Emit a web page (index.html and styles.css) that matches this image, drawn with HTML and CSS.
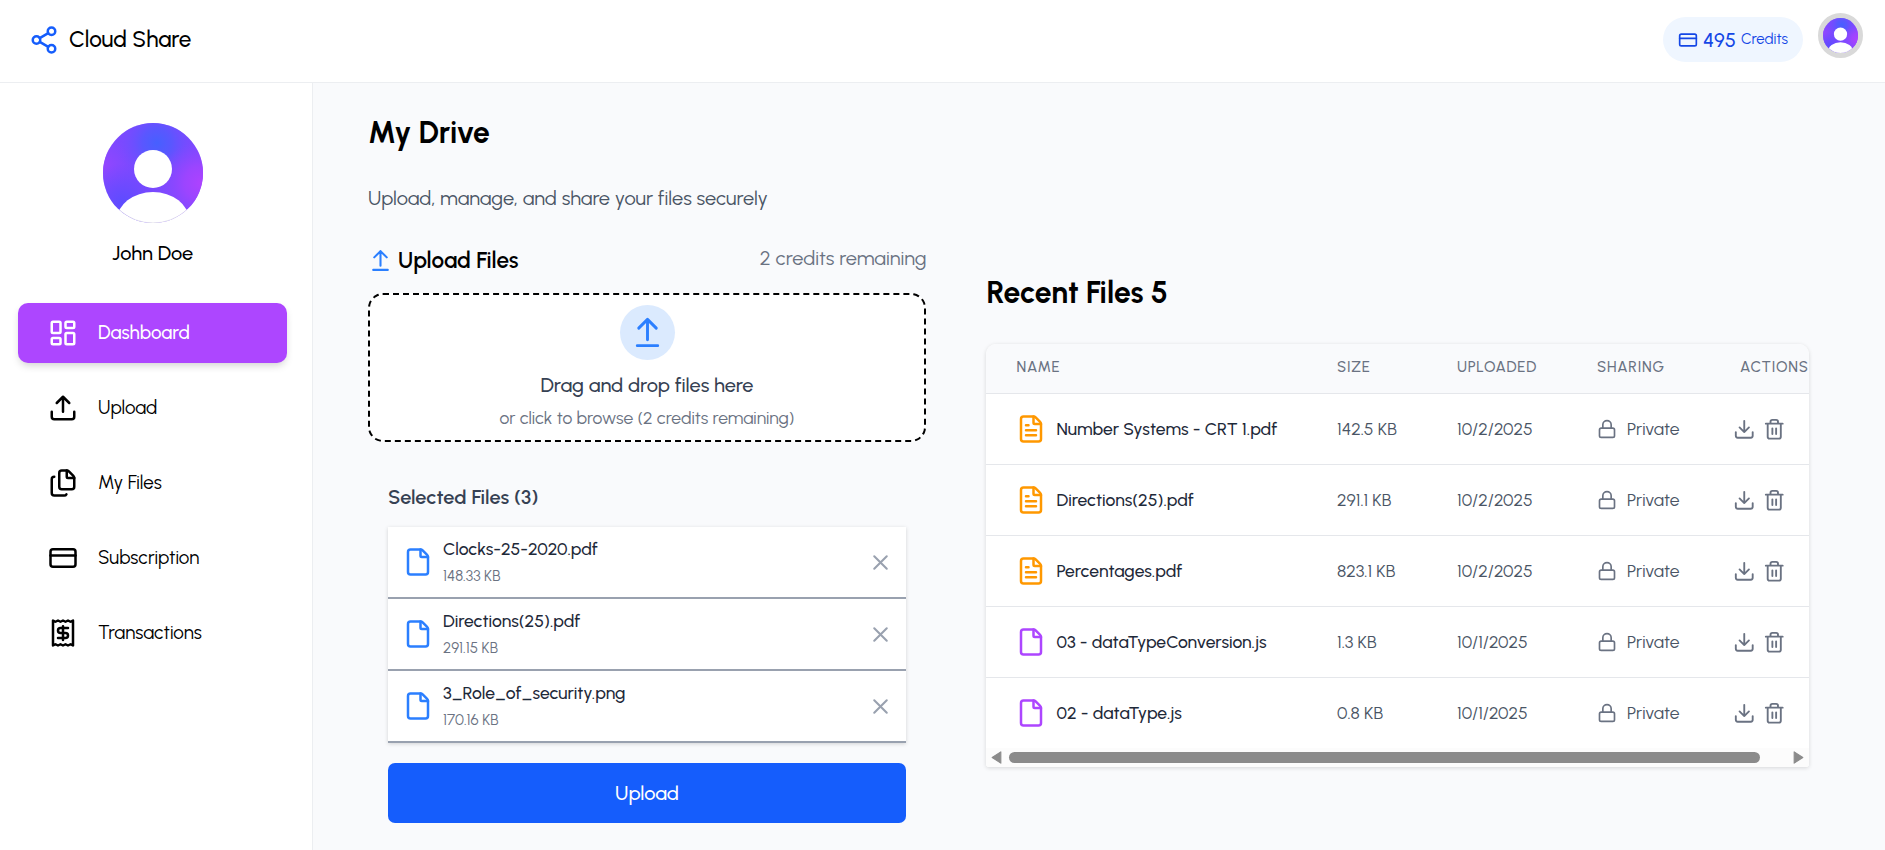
FILE: index.html
```html
<!DOCTYPE html>
<html lang="en">
<head>
<meta charset="utf-8">
<title>Cloud Share</title>
<link rel="stylesheet" href="styles.css">
</head>
<body>
<svg class="sprite" aria-hidden="true">
  <defs>
    <radialGradient id="g-top" cx="0.54" cy="0.2" r="0.42"><stop offset="0" stop-color="#4660ff"/><stop offset="0.35" stop-color="#5459ff" stop-opacity="0.85"/><stop offset="1" stop-color="#7a48ff" stop-opacity="0"/></radialGradient>
    <radialGradient id="g-right" cx="0.98" cy="0.6" r="0.42"><stop offset="0" stop-color="#ae42ff"/><stop offset="0.4" stop-color="#a144ff" stop-opacity="0.85"/><stop offset="1" stop-color="#8a48ff" stop-opacity="0"/></radialGradient>
    <radialGradient id="g-left" cx="0" cy="0.42" r="0.3"><stop offset="0" stop-color="#9446ff"/><stop offset="1" stop-color="#8a48ff" stop-opacity="0"/></radialGradient>
    <radialGradient id="g-bottom" cx="0.2" cy="0.8" r="0.4"><stop offset="0" stop-color="#5c4cff"/><stop offset="1" stop-color="#6a48ff" stop-opacity="0"/></radialGradient>
    <clipPath id="round"><circle cx="50" cy="50" r="50"/></clipPath>
    <symbol id="avatar" viewBox="0 0 100 100">
      <g clip-path="url(#round)">
        <rect width="100" height="100" fill="#7d49ff"/>
        <rect width="100" height="100" fill="url(#g-left)"/>
        <rect width="100" height="100" fill="url(#g-bottom)"/>
        <rect width="100" height="100" fill="url(#g-top)"/>
        <rect width="100" height="100" fill="url(#g-right)"/>
        <circle cx="50" cy="46" r="19" fill="#fff"/>
        <ellipse cx="50" cy="97" rx="36" ry="28" fill="#fff"/>
        <path d="M17 87.6A50 50 0 0 0 83 87.6" fill="none" stroke="#d9dbe2" stroke-width="0.8"/>
      </g>
    </symbol>
    <symbol id="share" viewBox="0 0 24 24"><circle cx="18" cy="5" r="3"/><circle cx="6" cy="12" r="3"/><circle cx="18" cy="19" r="3"/><path d="m8.59 13.51 6.83 3.98M15.41 6.51l-6.82 3.98"/></symbol>
    <symbol id="card" viewBox="0 0 24 24"><rect width="20" height="14" x="2" y="5" rx="2"/><path d="M2 10h20"/></symbol>
    <symbol id="dash" viewBox="0 0 24 24"><rect width="7" height="9" x="3" y="3" rx="1"/><rect width="7" height="5" x="14" y="3" rx="1"/><rect width="7" height="9" x="14" y="12" rx="1"/><rect width="7" height="5" x="3" y="16" rx="1"/></symbol>
    <symbol id="upload" viewBox="0 0 24 24"><path d="M12 3v12M17 8l-5-5-5 5M21 15v4a2 2 0 0 1-2 2H5a2 2 0 0 1-2-2v-4"/></symbol>
    <symbol id="download" viewBox="0 0 24 24"><path d="M12 15V3M7 10l5 5 5-5M21 15v4a2 2 0 0 1-2 2H5a2 2 0 0 1-2-2v-4"/></symbol>
    <symbol id="files" viewBox="0 0 24 24"><path d="M15 2h-4a2 2 0 0 0-2 2v11a2 2 0 0 0 2 2h8a2 2 0 0 0 2-2V8"/><path d="M16.706 2.706A2.4 2.4 0 0 0 15 2v5a1 1 0 0 0 1 1h5a2.4 2.4 0 0 0-.706-1.706z"/><path d="M5 7a2 2 0 0 0-2 2v11a2 2 0 0 0 2 2h8a2 2 0 0 0 1.732-1"/></symbol>
    <symbol id="receipt" viewBox="0 0 24 24"><path d="M4 2v20l2-1 2 1 2-1 2 1 2-1 2 1 2-1 2 1V2l-2 1-2-1-2 1-2-1-2 1-2-1-2 1Z"/><path d="M16 8h-6a2 2 0 1 0 0 4h4a2 2 0 1 1 0 4H8M12 17.5v-11"/></symbol>
    <symbol id="arrow" viewBox="0 0 24 24"><path d="m18 9-6-6-6 6M12 3v14M5 21h14"/></symbol>
    <symbol id="file" viewBox="0 0 24 24"><path d="M6 22a2 2 0 0 1-2-2V4a2 2 0 0 1 2-2h8a2.4 2.4 0 0 1 1.704.706l3.588 3.588A2.4 2.4 0 0 1 20 8v12a2 2 0 0 1-2 2z"/><path d="M14 2v5a1 1 0 0 0 1 1h5"/></symbol>
    <symbol id="doc" viewBox="0 0 24 24"><path d="M6 22a2 2 0 0 1-2-2V4a2 2 0 0 1 2-2h8a2.4 2.4 0 0 1 1.704.706l3.588 3.588A2.4 2.4 0 0 1 20 8v12a2 2 0 0 1-2 2z"/><path d="M14 2v5a1 1 0 0 0 1 1h5M10 9H8M16 13H8M16 17H8"/></symbol>
    <symbol id="x" viewBox="0 0 24 24"><path d="M18 6 6 18M6 6l12 12"/></symbol>
    <symbol id="lock" viewBox="0 0 24 24"><rect width="18" height="11" x="3" y="11" rx="2"/><path d="M7 11V7a5 5 0 0 1 10 0v4"/></symbol>
    <symbol id="trash" viewBox="0 0 24 24"><path d="M10 11v6M14 11v6M19 6v14a2 2 0 0 1-2 2H7a2 2 0 0 1-2-2V6M3 6h18M8 6V4a2 2 0 0 1 2-2h4a2 2 0 0 1 2 2v2"/></symbol>
  </defs>
</svg>

<header class="topbar">
  <div class="brand"><svg class="icon i30"><use href="#share"/></svg><span>Cloud Share</span></div>
  <div class="account">
    <div class="credits"><svg class="icon i20"><use href="#card"/></svg><span class="credits-num">495</span><span class="credits-label">Credits</span></div>
    <div class="user-btn"><svg><use href="#avatar"/></svg></div>
  </div>
</header>

<div class="shell">
  <aside class="sidebar">
    <svg class="profile-pic"><use href="#avatar"/></svg>
    <div class="profile-name">John Doe</div>
    <nav class="nav">
      <a class="nav-item active"><svg class="icon i30"><use href="#dash"/></svg><span>Dashboard</span></a>
      <a class="nav-item"><svg class="icon i30"><use href="#upload"/></svg><span>Upload</span></a>
      <a class="nav-item"><svg class="icon i30"><use href="#files"/></svg><span>My Files</span></a>
      <a class="nav-item"><svg class="icon i30"><use href="#card"/></svg><span>Subscription</span></a>
      <a class="nav-item"><svg class="icon i30"><use href="#receipt"/></svg><span>Transactions</span></a>
    </nav>
  </aside>

  <main class="main">
    <h1 class="title">My Drive</h1>
    <p class="subtitle">Upload, manage, and share your files securely</p>
    <div class="columns">
      <section class="uploader">
        <div class="uploader-head">
          <h2 class="uploader-title"><svg class="icon i25"><use href="#arrow"/></svg><span>Upload Files</span></h2>
          <span class="remaining">2 credits remaining</span>
        </div>
        <div class="dropzone">
          <div class="drop-icon"><svg class="icon i35"><use href="#arrow"/></svg></div>
          <p class="drop-main">Drag and drop files here</p>
          <p class="drop-sub">or click to browse (2 credits remaining)</p>
        </div>
        <div class="selected">
          <h3 class="selected-title">Selected Files (3)</h3>
          <ul class="picked">
            <li class="picked-row"><svg class="icon i30 blue"><use href="#file"/></svg><div class="picked-info"><span class="picked-name">Clocks-25-2020.pdf</span><span class="picked-size">148.33 KB</span></div><svg class="icon i25 close"><use href="#x"/></svg></li>
            <li class="picked-row"><svg class="icon i30 blue"><use href="#file"/></svg><div class="picked-info"><span class="picked-name">Directions(25).pdf</span><span class="picked-size">291.15 KB</span></div><svg class="icon i25 close"><use href="#x"/></svg></li>
            <li class="picked-row"><svg class="icon i30 blue"><use href="#file"/></svg><div class="picked-info"><span class="picked-name">3_Role_of_security.png</span><span class="picked-size">170.16 KB</span></div><svg class="icon i25 close"><use href="#x"/></svg></li>
          </ul>
          <button class="upload-btn">Upload</button>
        </div>
      </section>

      <section class="recent">
        <h2 class="recent-title">Recent Files 5</h2>
        <div class="table-card">
          <div class="row head"><span class="th-name">NAME</span><span>SIZE</span><span>UPLOADED</span><span>SHARING</span><span class="th-act">ACTIONS</span></div>
          <div class="row"><span class="fname"><svg class="icon i30 orange"><use href="#doc"/></svg><span class="txt">Number Systems - CRT 1.pdf</span></span><span class="txt">142.5 KB</span><span class="txt">10/2/2025</span><span class="share"><svg class="icon i20"><use href="#lock"/></svg><span class="txt">Private</span></span><span class="acts"><svg class="icon i22"><use href="#download"/></svg><svg class="icon i22"><use href="#trash"/></svg></span></div>
          <div class="row"><span class="fname"><svg class="icon i30 orange"><use href="#doc"/></svg><span class="txt">Directions(25).pdf</span></span><span class="txt">291.1 KB</span><span class="txt">10/2/2025</span><span class="share"><svg class="icon i20"><use href="#lock"/></svg><span class="txt">Private</span></span><span class="acts"><svg class="icon i22"><use href="#download"/></svg><svg class="icon i22"><use href="#trash"/></svg></span></div>
          <div class="row"><span class="fname"><svg class="icon i30 orange"><use href="#doc"/></svg><span class="txt">Percentages.pdf</span></span><span class="txt">823.1 KB</span><span class="txt">10/2/2025</span><span class="share"><svg class="icon i20"><use href="#lock"/></svg><span class="txt">Private</span></span><span class="acts"><svg class="icon i22"><use href="#download"/></svg><svg class="icon i22"><use href="#trash"/></svg></span></div>
          <div class="row"><span class="fname"><svg class="icon i30 purple"><use href="#file"/></svg><span class="txt">03 - dataTypeConversion.js</span></span><span class="txt">1.3 KB</span><span class="txt">10/1/2025</span><span class="share"><svg class="icon i20"><use href="#lock"/></svg><span class="txt">Private</span></span><span class="acts"><svg class="icon i22"><use href="#download"/></svg><svg class="icon i22"><use href="#trash"/></svg></span></div>
          <div class="row last"><span class="fname"><svg class="icon i30 purple"><use href="#file"/></svg><span class="txt">02 - dataType.js</span></span><span class="txt">0.8 KB</span><span class="txt">10/1/2025</span><span class="share"><svg class="icon i20"><use href="#lock"/></svg><span class="txt">Private</span></span><span class="acts"><svg class="icon i22"><use href="#download"/></svg><svg class="icon i22"><use href="#trash"/></svg></span></div>
          <div class="scrollbar">
            <svg class="sb-arrow" viewBox="0 0 10 12"><path d="M9 .8 1 6l8 5.2z"/></svg>
            <div class="sb-thumb"></div>
            <svg class="sb-arrow" viewBox="0 0 10 12"><path d="M1 .8 9 6l-8 5.2z"/></svg>
          </div>
        </div>
      </section>
    </div>
  </main>
</div>
</body>
</html>
```
FILE: styles.css
```css
* { box-sizing: border-box; margin: 0; padding: 0; }
body {
  height: 850px;
  overflow: hidden;
  display: flex;
  flex-direction: column;
  font-family: Urbanist, Lato, "Open Sans", sans-serif;
  font-size: 20px;
  color: #000;
  background: #fff;
}
.sprite { position: absolute; width: 0; height: 0; }
.icon {
  flex: none;
  fill: none;
  stroke: currentColor;
  stroke-width: 2;
  stroke-linecap: round;
  stroke-linejoin: round;
}
.i20 { width: 20px; height: 20px; }
.i22 { width: 22.5px; height: 22.5px; }
.i25 { width: 25px; height: 25px; }
.i30 { width: 30px; height: 30px; }
.i35 { width: 35px; height: 35px; }
.blue { color: #2b7fff; }
.orange { color: #ff9800; }
.purple { color: #ad46ff; }

/* Top bar */
.topbar {
  flex: none;
  height: 83px;
  padding: 0 22px 3px 29px;
  display: flex;
  align-items: center;
  justify-content: space-between;
  border-bottom: 1px solid #eceef1;
}
.brand { display: flex; align-items: center; gap: 10px; font-size: 22.5px; font-weight: 500; }
.brand .icon { color: #155dfc; }
.brand span { line-height: 30px; }
.account { display: flex; align-items: center; gap: 15px; }
.credits {
  width: 140px;
  height: 45px;
  padding-left: 15px;
  display: flex;
  align-items: center;
  gap: 5px;
  border-radius: 23px;
  background: #eff6ff;
  color: #1447e6;
}
.credits-num { font-weight: 500; }
.credits-label { margin-top: -2px; font-size: 15px; }
.user-btn {
  width: 45px;
  height: 45px;
  margin-bottom: 8px;
  border: 5px solid #d9d9d9;
  border-radius: 50%;
  background: #d9d9d9;
}
.user-btn svg { display: block; width: 35px; height: 35px; }

.shell { flex: 1; display: flex; min-height: 0; }

/* Sidebar */
.sidebar {
  flex: none;
  width: 313px;
  padding: 40px 25px 0 18px;
  display: flex;
  flex-direction: column;
  align-items: center;
  border-right: 1px solid #eceef1;
}
.profile-pic { width: 100px; height: 100px; }
.profile-name { margin-top: 16px; line-height: 28px; font-weight: 500; }
.nav { align-self: stretch; margin-top: 36px; display: flex; flex-direction: column; gap: 15px; }
.nav-item {
  height: 60px;
  padding-left: 30px;
  display: flex;
  align-items: center;
  gap: 20px;
  border-radius: 10px;
  font-size: 18.75px;
}
.nav-item span { margin-top: -1px; }
.active {
  color: #fff;
  background: #ad46ff;
  font-weight: 500;
  box-shadow: 0 4px 8px -2px rgba(0, 0, 0, 0.2);
}

/* Main */
.main { flex: 1; min-width: 0; padding: 32px 76px 0 55px; background: #f9fafc; }
.title, .recent-title { font-size: 30px; line-height: 36px; font-weight: 700; }
.subtitle { margin-top: 33px; line-height: 28px; color: #4a5565; }
.columns { margin-top: 33px; display: grid; grid-template-columns: 558px 823px; gap: 60px; align-items: start; }

.uploader-head { height: 30px; display: flex; justify-content: space-between; }
.uploader-title { display: flex; align-items: center; gap: 5px; font-size: 22.5px; line-height: 30px; font-weight: 600; }
.uploader-title .icon { color: #2b7fff; }
.uploader-title span { padding-top: 2px; }
.remaining { line-height: 26px; margin-right: -0.5px; color: #6a7282; }
.dropzone {
  height: 149px;
  margin-top: 18px;
  padding-top: 10px;
  display: flex;
  flex-direction: column;
  align-items: center;
  border: 2px dashed #000;
  border-radius: 15px;
  background: #fff;
}
.drop-icon {
  width: 55px;
  height: 55px;
  display: grid;
  place-items: center;
  border-radius: 50%;
  background: #dbeafe;
  color: #2b7fff;
}
.drop-main { margin-top: 11px; line-height: 28px; font-weight: 500; color: #364153; }
.drop-sub { margin-top: 6px; font-size: 17.5px; line-height: 25px; color: #6a7282; }

.selected { padding: 41px 20px 0; }
.selected-title { font-size: 20px; line-height: 28px; font-weight: 600; color: #364153; }
.picked { margin-top: 16px; list-style: none; background: #fff; box-shadow: 0 1px 4px rgba(0, 0, 0, 0.16); }
.picked-row { height: 72px; padding: 0 13px 0 15px; display: flex; align-items: center; border-bottom: 2px solid #99a1af; }
.picked-info { flex: 1; margin-left: 10px; display: flex; flex-direction: column; }
.picked-name { font-size: 17.5px; line-height: 28px; font-weight: 500; color: #1e2939; }
.picked-size { font-size: 15px; line-height: 26px; color: #6a7282; }
.close { color: #99a1af; }
.upload-btn {
  display: block;
  width: 100%;
  height: 60px;
  margin-top: 20px;
  border: 0;
  border-radius: 7px;
  background: #155dfc;
  color: #fff;
  font: 500 20px Urbanist, Lato, sans-serif;
}

/* Recent files */
.recent-title { margin-top: 30px; padding-left: 0.5px; }
.table-card {
  margin-top: 33px;
  overflow: hidden;
  border-radius: 10px 10px 3px 3px;
  background: #fff;
  box-shadow: 0 1px 4px rgba(0, 0, 0, 0.14);
}
.row {
  height: 71px;
  padding-left: 31px;
  display: grid;
  grid-template-columns: 320px 120px 140px 136.5px 1fr;
  align-items: center;
  border-bottom: 1px solid #e5e7eb;
  color: #4a5565;
  font-size: 17.5px;
  white-space: nowrap;
}
.last { height: 70px; border-bottom: 0; }
.head {
  height: 50px;
  padding-bottom: 3px;
  font-size: 15px;
  font-weight: 500;
  letter-spacing: 0.75px;
  color: #6a7282;
  background: #f9fafc;
}
.th-name { margin-left: -0.5px; }
.th-act { padding-left: 6.5px; }
.txt { line-height: 20px; padding-bottom: 1px; }
.fname { display: flex; align-items: center; gap: 10.5px; font-weight: 500; color: #1e2939; }
.fname .icon { margin-left: -1px; }
.share { display: flex; align-items: center; gap: 10.5px; }
.share .icon, .acts { color: #6a7282; }
.acts { display: flex; gap: 7.5px; }
.share .icon, .acts .icon { margin-left: -0.5px; }
.scrollbar {
  height: 19px;
  padding: 0 5px;
  display: flex;
  align-items: center;
  background: #fcfcfc;
}
.sb-arrow { width: 11px; height: 13px; fill: #8b8b8b; stroke: #8b8b8b; stroke-linejoin: round; }
.sb-thumb { width: 751px; height: 11px; margin: 0 auto 0 7px; border-radius: 6px; background: #8b8b8b; }
```
